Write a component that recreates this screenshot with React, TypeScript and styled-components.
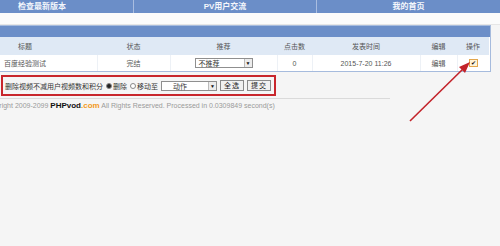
import React from "react";
import styled, { createGlobalStyle } from "styled-components";

const GlobalStyle = createGlobalStyle`
  body {
    margin: 0;
    background: #f5f5f5;
    font-family: "Liberation Sans", "Noto Sans CJK SC", sans-serif;
  }
`;

const Page = styled.div`
  position: relative;
  width: 500px;
  height: 246px;
  overflow: hidden;
  background: #f5f5f5;
  color: #444;
  font-size: 7px;
`;

const NavBar = styled.div`
  display: grid;
  grid-template-columns: 133px 183px 184px;
  height: 13px;
  background: #6b8ec8;
`;

const NavCell = styled.div<{ $first?: boolean }>`
  color: #f4f7fc;
  font-weight: bold;
  font-size: 8px;
  line-height: 13px;
  text-align: ${(p) => (p.$first ? "left" : "center")};
  padding-left: ${(p) => (p.$first ? "18px" : "0")};
  border-left: ${(p) => (p.$first ? "none" : "1px solid #a9bde0")};
`;

const Band = styled.div`
  height: 11px;
  background: #fbfbfb;
  border-bottom: 1px solid #e6e6e6;
`;

const TableBox = styled.div`
  width: 490px;
  border: 1px solid #a6bbdd;
  border-left: none;
  background: #fff;
`;

const CaptionBar = styled.div`
  height: 11px;
  background: #6b8ec8;
`;

const Table = styled.table`
  width: 489px;
  border-collapse: collapse;
  table-layout: fixed;
`;

const HeadCell = styled.th<{ $left?: boolean }>`
  height: 18px;
  padding: 0;
  padding-left: ${(p) => (p.$left ? "18px" : "0")};
  background: #dfe9f5;
  font-weight: normal;
  color: #555;
  font-size: 7px;
  text-align: ${(p) => (p.$left ? "left" : "center")};
`;

const Cell = styled.td<{ $left?: boolean }>`
  height: 16px;
  padding: 0 0 0 ${(p) => (p.$left ? "4px" : "0")};
  text-align: ${(p) => (p.$left ? "left" : "center")};
  border-left: ${(p) => (p.$left ? "none" : "1px solid #edf1f6")};
  color: #555;
  font-size: 7px;
  white-space: nowrap;
`;

const FakeSelect = styled.span<{ $w: number }>`
  display: inline-flex;
  align-items: center;
  justify-content: space-between;
  box-sizing: border-box;
  width: ${(p) => p.$w}px;
  height: 10px;
  border: 1px solid #8f8f8f;
  background: #fff;
  padding-left: 3px;
  font-size: 7px;
  color: #333;
  vertical-align: middle;
`;

const Arrow = styled.span`
  width: 7px;
  height: 8px;
  background: #ececec;
  border-left: 1px solid #bbb;
  font-size: 5px;
  line-height: 8px;
  text-align: center;
  color: #111;
`;

const Check = styled.span`
  display: inline-block;
  box-sizing: border-box;
  width: 9px;
  height: 8px;
  border: 1px solid #e2a64c;
  background: #fff3d6;
  font-size: 6px;
  line-height: 6px;
  color: #111;
  vertical-align: middle;
`;

const FormBox = styled.div`
  display: flex;
  align-items: center;
  gap: 3px;
  box-sizing: border-box;
  width: 275px;
  height: 21px;
  margin: 3px 0 0 1px;
  border: 2px solid #c8262c;
  padding-left: 2px;
  font-size: 7px;
  color: #333;
  white-space: nowrap;
`;

const Radio = styled.span<{ $on?: boolean }>`
  display: inline-flex;
  align-items: center;
  gap: 1px;
  &::before {
    content: "";
    width: 4px;
    height: 4px;
    border-radius: 50%;
    border: 1px solid #888;
    background: ${(p) => (p.$on ? "#222" : "#fff")};
  }
`;

const Btn = styled.span`
  box-sizing: border-box;
  height: 11px;
  padding: 0 3px;
  border: 1px solid #8a8a8a;
  background: #f1f1f1;
  font-size: 7px;
  line-height: 9px;
  color: #222;
  letter-spacing: 1px;
`;

const Footer = styled.div`
  width: 390px;
  margin-top: 2px;
  border-top: 1px solid #dadada;
  padding-top: 2px;
  font-size: 7px;
  color: #9a9a9a;
  white-space: nowrap;
`;

const FooterText = styled.span`
  margin-left: -17px;
`;

const Brand = styled.b`
  color: #111;
  font-size: 8px;
`;

const Dot = styled.b`
  color: #f29a1c;
  font-size: 8px;
`;

const Overlay = styled.svg`
  position: absolute;
  left: 0;
  top: 0;
  pointer-events: none;
`;

const cols = [97, 73, 107, 35, 108, 37, 32];

export default function App() {
  return (
    <Page>
      <GlobalStyle />
      <NavBar>
        <NavCell $first>检查最新版本</NavCell>
        <NavCell>PV用户交流</NavCell>
        <NavCell>我的首页</NavCell>
      </NavBar>
      <Band />
      <TableBox>
        <CaptionBar />
        <Table>
          <colgroup>
            {cols.map((w, i) => (
              <col key={i} style={{ width: w }} />
            ))}
          </colgroup>
          <thead>
            <tr>
              <HeadCell $left>标题</HeadCell>
              <HeadCell>状态</HeadCell>
              <HeadCell>推荐</HeadCell>
              <HeadCell>点击数</HeadCell>
              <HeadCell>发表时间</HeadCell>
              <HeadCell>编辑</HeadCell>
              <HeadCell>操作</HeadCell>
            </tr>
          </thead>
          <tbody>
            <tr>
              <Cell $left>百度经验测试</Cell>
              <Cell>完结</Cell>
              <Cell>
                <FakeSelect $w={58}>
                  不推荐<Arrow>▼</Arrow>
                </FakeSelect>
              </Cell>
              <Cell>0</Cell>
              <Cell>2015-7-20 11:26</Cell>
              <Cell>编辑</Cell>
              <Cell>
                <Check>✔</Check>
              </Cell>
            </tr>
          </tbody>
        </Table>
      </TableBox>
      <FormBox>
        <span>删除视频不减用户视频数和积分</span>
        <Radio $on>删除</Radio>
        <Radio>移动至</Radio>
        <FakeSelect $w={56}>
          <span style={{ paddingLeft: 8 }}>动作</span>
          <Arrow>▼</Arrow>
        </FakeSelect>
        <Btn>全选</Btn>
        <Btn>提交</Btn>
      </FormBox>
      <Footer>
        <FooterText>
          Copyright 2009-2099 <Brand>PHPvod</Brand>
          <Dot>.com</Dot> All Rights Reserved. Processed in 0.0309849 second(s)
        </FooterText>
      </Footer>
      <Overlay width="500" height="246" viewBox="0 0 500 246">
        <line x1="410" y1="121" x2="465" y2="67" stroke="#c3232a" strokeWidth="1.6" />
        <polygon points="470,62 459,67 465,73" fill="#c3232a" />
      </Overlay>
    </Page>
  );
}
